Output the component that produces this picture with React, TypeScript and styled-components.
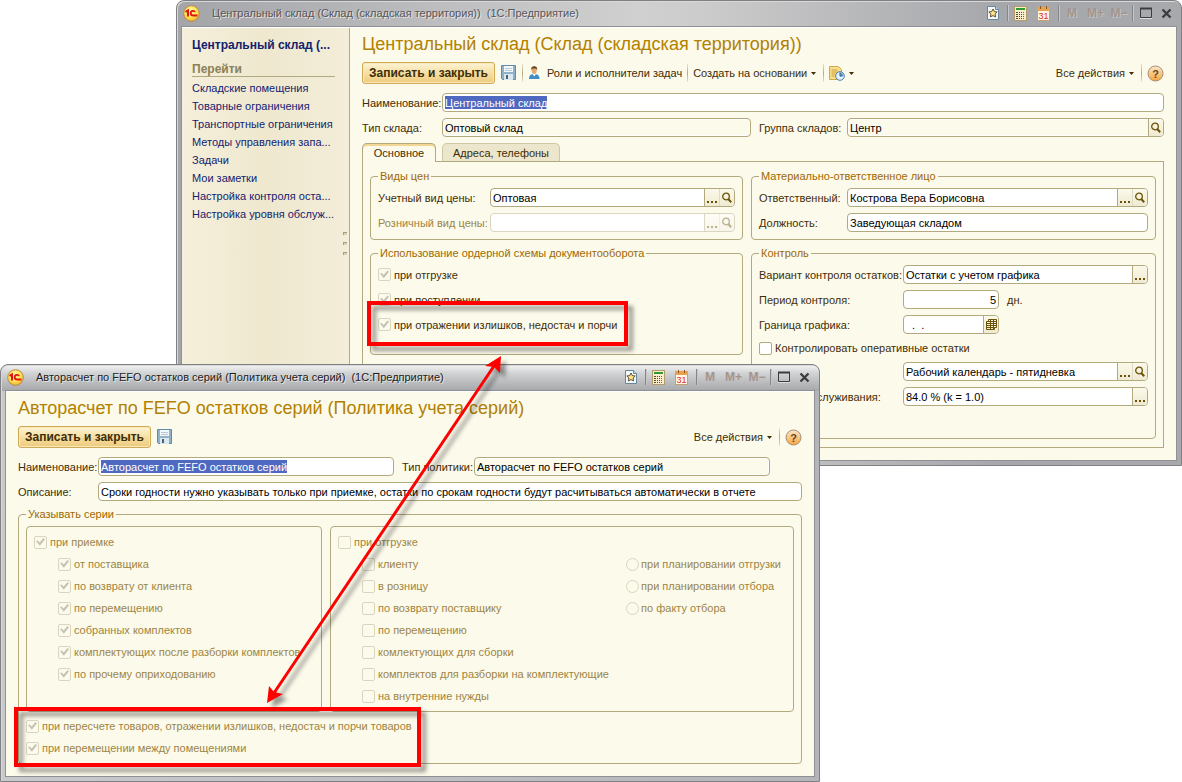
import React, { useId } from "react";
import styled, { createGlobalStyle, css } from "styled-components";

const c = {
  paper: "#fcfaeb",
  line: "#b2a97f",
  faintLine: "#d9d5c0",
  text: "#3f2d06",
  muted: "#9c8544",
  title: "#b28100",
  legend: "#a06800",
  link: "#14226e",
  red: "#ff0000",
};

const GlobalStyle = createGlobalStyle`
  * { box-sizing: border-box; }
  body {
    margin: 0;
    background: #fff;
    color: ${c.text};
    font: 11px/14px "Liberation Sans", Arial, sans-serif;
  }
  button, input { font: inherit; color: inherit; margin: 0; }
`;

/* ---------- desktop and windows ---------- */

const Desktop = styled.main`
  position: relative;
  min-height: 782px;
  overflow: hidden;
`;

const Frame = styled.section<{ $active?: boolean }>`
  position: absolute;
  padding: 0 5px 5px;
  border: 1px solid #7f8083;
  border-radius: 8px 8px 0 0;
  background: ${(p) =>
    p.$active
      ? "linear-gradient(180deg, #f4f4f4 0, #d2d3d4 8px, #a6a7aa 26px, transparent 26px), linear-gradient(90deg, #c9c9cb, #b4b5b8)"
      : "linear-gradient(90deg, #a4a5a9 0, #d0d0d0 46%, #cccccc 52%, #a6a7ab 82%, #a8a9ac 100%)"};
  box-shadow: inset 1px 1px 0 #d8d8d8;
`;

const WarehouseFrame = styled(Frame)`
  top: 0;
  left: 176px;
  right: 0;
`;

const PolicyFrame = styled(Frame)`
  top: 364px;
  left: 0;
  right: 362px;
`;

const TitleBar = styled.header<{ $active?: boolean }>`
  display: flex;
  align-items: center;
  height: 26px;
  padding: 0 4px 2px 1px;
  color: ${(p) => (p.$active ? "#1c1c1c" : "#55565a")};
  text-shadow: 1px 1px 0 #e6e6e6;
`;

const TitleText = styled.span`
  flex: 1;
  margin-left: 12px;
  white-space: pre;
`;

const BarButton = styled.button<{ $w: number; $gap?: number }>`
  display: flex;
  justify-content: center;
  width: ${(p) => p.$w}px;
  margin-right: ${(p) => p.$gap ?? 0}px;
  padding: 0;
  border: 0;
  background: none;
`;

const MemoryButton = styled(BarButton)`
  color: #a3968f;
  font-size: 12px;
  font-weight: 700;
  text-shadow: 1px 1px 0 #c4c1c0;
`;

const BarRule = styled.i<{ $gap: number }>`
  width: 2px;
  height: 16px;
  margin-right: ${(p) => p.$gap}px;
  border-left: 1px solid #85868a;
  border-right: 1px solid #c6c6c8;
`;

const Client = styled.div`
  display: flex;
  background: ${c.paper};
  border-top: 1px solid #fff;
  box-shadow: 0 0 0 1px #8f9093;
`;

const Page = styled.div<{ $bottom: number }>`
  flex: 1;
  min-width: 0;
  padding: 4px 12px ${(p) => p.$bottom}px;
`;

const Heading = styled.h1`
  margin: 0 0 6px;
  color: ${c.title};
  font-size: 18px;
  font-weight: 400;
  line-height: 24px;
`;

/* ---------- sidebar ---------- */

const Sidebar = styled.nav`
  position: relative;
  flex: none;
  width: 168px;
  padding: 10px 14px 0 10px;
  border-right: 1px solid ${c.line};
  background: linear-gradient(90deg, #f5efdb, #efe8cf 50%, #f3edd9);
`;

const SidebarTitle = styled.a`
  display: block;
  margin-bottom: 10px;
  color: ${c.link};
  font-size: 12px;
  font-weight: 700;
  text-decoration: none;
  white-space: nowrap;
`;

const SidebarGroup = styled.h2`
  margin: 0 0 2px;
  border-bottom: 1px solid ${c.line};
  color: #8b8057;
  font-size: 12px;
  line-height: 14px;
`;

const SidebarLink = styled.a`
  display: block;
  color: ${c.link};
  line-height: 18px;
  text-decoration: none;
  white-space: nowrap;
`;

const Grip = styled.div`
  position: absolute;
  top: 204px;
  right: 2px;
  display: grid;
  gap: 7px;

  i {
    width: 4px;
    height: 3px;
    border-top: 1px solid #a79e78;
    border-left: 1px solid #a79e78;
    background: #d9d2b6;
  }
`;

/* ---------- toolbar ---------- */

const Toolbar = styled.div`
  display: flex;
  align-items: center;
  height: 22px;
  margin-bottom: 9px;
`;

const PrimaryButton = styled.button`
  width: 133px;
  height: 22px;
  padding: 0;
  border: 1px solid #d0a954;
  border-radius: 3px;
  background: linear-gradient(#fdf3d4, #f6dfa4 50%, #edca7c);
  box-shadow: inset 0 0 0 1px #fbe9bb;
  font-size: 12px;
  font-weight: 700;
  white-space: nowrap;
`;

const ToolButton = styled.button`
  display: flex;
  align-items: center;
  gap: 4px;
  padding: 0;
  border: 0;
  background: none;
  white-space: nowrap;
`;

const SaveButton = styled(ToolButton)`
  margin-left: 6px;
`;

const IconText = styled(ToolButton)`
  gap: 6px;
`;

const ToolRule = styled.i`
  width: 1px;
  height: 18px;
  margin: 0 5px;
  background: linear-gradient(#e8e3cc, ${c.line}, #e8e3cc);
`;

const Spacer = styled.span`
  flex: 1;
`;

/* ---------- fields ---------- */

const Row = styled.div<{ $h?: number }>`
  display: flex;
  align-items: center;
  height: ${(p) => p.$h ?? 19}px;
  & + & { margin-top: 6px; }
`;

const FieldLabel = styled.label<{ $w: number; $off?: boolean }>`
  flex: none;
  width: ${(p) => p.$w}px;
  color: ${(p) => (p.$off ? c.muted : "inherit")};
  white-space: nowrap;
`;

const Box = styled.span<{ $w?: number; $off?: boolean; $grow?: number; $readOnly?: boolean; $end?: number }>`
  display: flex;
  flex: ${(p) => (p.$w ? `0 0 ${p.$w}px` : `${p.$grow ?? 1} 1 0`)};
  min-width: 0;
  height: 19px;
  margin-right: ${(p) => p.$end ?? 0}px;
  border: 1px solid ${(p) => (p.$off ? c.faintLine : c.line)};
  border-radius: 4px;
  background: ${(p) => (p.$readOnly ? c.paper : "#fff")};
  box-shadow: ${(p) => (p.$readOnly ? "inset 0 0 0 1px #fff" : "none")};
  overflow: hidden;
`;

const TextInput = styled.input<{ $selected?: boolean; $right?: boolean }>`
  flex: 1;
  min-width: 0;
  padding: 0 2px;
  border: 0;
  outline: 0;
  background: none;
  color: #000;
  text-align: ${(p) => (p.$right ? "right" : "left")};
  ${(p) =>
    p.$selected &&
    css`
      flex: none;
      field-sizing: content;
      margin: 2px;
      padding: 0;
      background: #5069c0;
      color: #fff;
    `}
`;

const FieldButton = styled.button<{ $off?: boolean; $plain?: boolean }>`
  display: flex;
  flex: none;
  align-items: center;
  justify-content: center;
  width: 15px;
  padding: 0;
  border: 0;
  border-left: 1px solid ${(p) => (p.$plain ? "#e0dbc3" : c.line)};
  background: linear-gradient(#fbf9ea, #efead2);
  color: #6b5206;
  opacity: ${(p) => (p.$off ? 0.45 : 1)};
`;

const Unit = styled.span`
  margin-left: 8px;
`;

const Group = styled.fieldset<{ $bottom?: number }>`
  min-width: 0;
  margin: 0;
  padding: 5px 7px ${(p) => p.$bottom ?? 7}px;
  border: 1px solid ${c.line};
  border-radius: 4px;

  > legend {
    margin-left: 0;
    padding: 0 2px;
    color: ${c.legend};
  }
`;

const Columns = styled.div`
  display: flex;
  gap: 8px;
`;

const Column = styled.div<{ $grow: number }>`
  display: flex;
  flex: ${(p) => p.$grow} 1 0;
  flex-direction: column;
  gap: 6px;
  min-width: 0;
`;

/* ---------- tick boxes ---------- */

const CheckLabel = styled.label<{ $muted?: boolean; $gap?: number }>`
  display: flex;
  align-items: center;
  gap: ${(p) => p.$gap ?? 3}px;
  color: ${(p) => (p.$muted ? c.muted : "inherit")};
  white-space: nowrap;
`;

const Tick = styled.input<{ $strong?: boolean }>`
  appearance: none;
  flex: none;
  width: 13px;
  height: 13px;
  border: 1px solid ${(p) => (p.$strong ? c.line : c.faintLine)};
  border-radius: ${(p) => (p.type === "radio" ? "50%" : "2px")};
  background: ${(p) => (p.$strong ? "#fff" : "transparent")};

  &:checked::before {
    content: "";
    display: block;
    width: 9px;
    height: 9px;
    margin: 1px;
    background: #c4c2b4;
    clip-path: polygon(0 40%, 18% 32%, 40% 55%, 84% 6%, 100% 20%, 42% 92%);
  }
`;

/* ---------- tabs ---------- */

const TabStrip = styled.div`
  display: flex;
  gap: 6px;
  height: 18px;
  margin-top: 6px;
`;

const Tab = styled.button<{ $on?: boolean; $w: number }>`
  width: ${(p) => p.$w}px;
  height: ${(p) => (p.$on ? 19 : 18)}px;
  padding: 0;
  border: 1px solid ${(p) => (p.$on ? c.line : "#cfc8a6")};
  border-bottom: 0;
  border-radius: 5px 5px 0 0;
  background: ${(p) => (p.$on ? c.paper : "#ece6cd")};
  box-shadow: ${(p) => (p.$on ? "inset 0 2px 0 #f3d594" : "none")};
  z-index: 1;
`;

const TabPanel = styled.div`
  padding: 7px 7px 8px;
  border: 1px solid ${c.line};
`;

/* ---------- policy form ---------- */

const SeriesColumns = styled.div`
  display: grid;
  grid-template-columns: 296fr 464fr;
  gap: 8px;
`;

const Panel = styled.div`
  min-height: 186px;
  padding: 4px 7px;
  border: 1px solid ${c.line};
  border-radius: 4px;
`;

const PanelSplit = styled.div`
  display: flex;
  justify-content: space-between;
  padding: 0 5px 0 24px;
`;

const CheckList = styled.div`
  display: grid;
  align-content: start;
  grid-auto-rows: 22px;
`;

/* ---------- markup drawn over the windows ---------- */

const Callout = styled.div<{ $x: number; $y: number; $w: number; $h: number }>`
  position: absolute;
  top: ${(p) => p.$y}px;
  left: ${(p) => p.$x}px;
  width: ${(p) => p.$w}px;
  height: ${(p) => p.$h}px;
  border: 4px solid ${c.red};
  filter: drop-shadow(5px 5px 2px rgba(0, 0, 0, 0.4));
  pointer-events: none;
`;

const ArrowLayer = styled.svg`
  position: absolute;
  top: 350px;
  left: 260px;
  pointer-events: none;
  filter: drop-shadow(5px 5px 2px rgba(0, 0, 0, 0.4));
`;

/* ---------- icons ---------- */

const Logo = () => (
  <svg width="17" height="17" viewBox="0 0 17 17" aria-hidden="true">
    <defs>
      <radialGradient id="sun" cx="0.45" cy="0.35" r="0.7">
        <stop offset="0" stopColor="#fffbb0" />
        <stop offset="0.6" stopColor="#ffe04e" />
        <stop offset="1" stopColor="#f0a62a" />
      </radialGradient>
    </defs>
    <circle cx="8.5" cy="8.5" r="7.8" fill="url(#sun)" stroke="#b98a4a" />
    <path d="M2.500 6.800L5 5.500V11.500" fill="none" stroke="#e0180c" strokeWidth="2" />
    <path d="M12 7C11.500 5.600 7.700 5.200 7.700 8.200C7.700 10.300 9.200 10.500 10.500 10.500H14.500" fill="none" stroke="#e0180c" strokeWidth="1.800" />
  </svg>
);

const StarPage = () => (
  <svg width="14" height="14" viewBox="0 0 14 14" aria-hidden="true">
    <path d="M1.500.5h8l3 3v10h-11z" fill="#f4f8fa" stroke="#64879b" />
    <path d="M9.500.5v3h3" fill="#c9dce6" stroke="#64879b" />
    <path d="M7 3l1.300 2.600 2.900.4-2.100 2 .5 2.900L7 9.600l-2.600 1.300.5-2.900-2.100-2 2.900-.4z" fill="#ffe28a" stroke="#5d5030" strokeWidth="1" />
  </svg>
);

const Calculator = () => (
  <svg width="14" height="15" viewBox="0 0 14 15" aria-hidden="true">
    <rect x=".5" y=".5" width="12" height="14" fill="#f8edcc" stroke="#b39b6b" />
    <rect x="2" y="2" width="9" height="2" fill="#2d9a32" />
    {[6, 8, 10, 12].map((y) =>
      [2, 5, 7, 9].map((x) => (
        <rect key={`${x}-${y}`} x={x} y={y} width={x === 2 ? 2 : 1} height="1" fill={x === 9 ? "#d6402c" : "#5c4a26"} />
      )),
    )}
  </svg>
);

const CalendarIcon = () => (
  <svg width="14" height="15" viewBox="0 0 14 15" aria-hidden="true">
    <rect x=".5" y="1.500" width="12" height="13" fill="#fff6e4" stroke="#c79f72" />
    <rect x="0" y="1" width="13" height="4" fill="#e5a250" />
    <path d="M3.500 0v3M9.500 0v3" stroke="#8d5520" />
    <text x="6.500" y="13" textAnchor="middle" fontSize="9" fill="#e0301e" style={{ textShadow: "none" }}>31</text>
  </svg>
);

const Maximize = () => (
  <svg width="12" height="12" viewBox="0 0 12 12" aria-hidden="true">
    <path d="M.5 1.500h11v9H.5z" fill="none" stroke="#3c3c3e" />
    <path d="M0 1.500h12" stroke="#3c3c3e" strokeWidth="2" />
    <path d="M0 11.500h12" stroke="#dedede" />
  </svg>
);

const Close = () => (
  <svg width="11" height="11" viewBox="0 0 11 11" aria-hidden="true">
    <path d="M1.500 1.500l8 8M9.500 1.500l-8 8" stroke="#3c3c3e" strokeWidth="2.300" />
  </svg>
);

const Floppy = () => (
  <svg width="16" height="16" viewBox="0 0 16 16" aria-hidden="true">
    <path d="M.5.5h14v14h-13l-1-1z" fill="#8fb2ca" stroke="#5f8aa8" />
    <rect x="3" y="1" width="9" height="6" fill="#f4f8fa" />
    <path d="M4 3.500h7M4 5.500h7" stroke="#b5cad6" />
    <rect x="3" y="9" width="9" height="6" fill="#dce8ee" />
    <rect x="5" y="10" width="2" height="4" fill="#41647d" />
  </svg>
);

const Person = () => (
  <svg width="13" height="14" viewBox="0 0 13 14" aria-hidden="true">
    <path d="M1 13c0-4 2-5 5-5s5.500 1 5.500 5z" fill="#3f8fc4" />
    <path d="M4.500 8l1.700 2.500L8 8z" fill="#fff" />
    <ellipse cx="6.200" cy="4.300" rx="2.500" ry="3.600" fill="#e0aa72" />
    <path d="M3.300 4C3 1 4.500.3 6.200.3S9.500 1 9.100 4L8 2.600H4.500z" fill="#6b4018" />
  </svg>
);

const Report = () => (
  <svg width="16" height="16" viewBox="0 0 16 16" aria-hidden="true">
    <path d="M.5 1.500h9l3 3v10H.5z" fill="#f8dd8a" stroke="#d2a84e" />
    <path d="M2.500 5h6M2.500 7h6M2.500 9h4M2.500 11h3" stroke="#cfa140" />
    <circle cx="11" cy="11" r="4.300" fill="#e8f2fa" stroke="#4a7fb2" />
    <path d="M11 11V7.500A3.500 3.500 0 0 1 14.500 11z" fill="#6aa4d4" />
    <path d="M11 7.500V11h2.500" fill="none" stroke="#2b5580" />
  </svg>
);

const Help = () => (
  <svg width="17" height="17" viewBox="0 0 17 17" aria-hidden="true">
    <defs>
      <linearGradient id="amber" x2="0" y2="1">
        <stop offset="0" stopColor="#fbe7cc" />
        <stop offset="1" stopColor="#f8a63c" />
      </linearGradient>
    </defs>
    <circle cx="8.500" cy="8.500" r="7.500" fill="url(#amber)" stroke="#a58d78" />
    <text x="8.500" y="12.500" textAnchor="middle" fontSize="11" fontWeight="700" fill="#6b4326">?</text>
  </svg>
);

const Caret = () => (
  <svg width="7" height="3" viewBox="0 0 7 3" aria-hidden="true">
    <path d="M0 0h5L2.500 3z" fill={c.text} />
  </svg>
);

const Magnifier = () => (
  <svg width="12" height="12" viewBox="0 0 12 12" aria-hidden="true">
    <circle cx="5" cy="4.500" r="3.300" fill="none" stroke="currentColor" strokeWidth="1.300" />
    <path d="M7.200 7l3 3.200" stroke="currentColor" strokeWidth="2" />
  </svg>
);

const Dots = () => (
  <svg width="11" height="12" viewBox="0 0 11 12" aria-hidden="true">
    <path d="M0 9h2v2H0zM4 9h2v2H4zM8 9h2v2H8z" fill="currentColor" />
  </svg>
);

const DateGrid = () => (
  <svg width="11" height="12" viewBox="0 0 11 12" aria-hidden="true">
    <path d="M2.500.5h8v8h-2v2h-8v-8h2zM.5 4.500h10M.5 6.500h10M.5 8.500h8M2.500 2.500h8M4.500 .5v10M7.500.5v10" fill="none" stroke="currentColor" />
  </svg>
);

/* ---------- parts ---------- */

function WindowBar({ title, active }: { title: string; active?: boolean }) {
  return (
    <TitleBar $active={active}>
      <Logo />
      <TitleText>{title}</TitleText>
      <BarButton $w={14} $gap={7} aria-label="Избранное"><StarPage /></BarButton>
      <BarRule $gap={5} />
      <BarButton $w={14} $gap={9} aria-label="Калькулятор"><Calculator /></BarButton>
      <BarButton $w={14} $gap={7} aria-label="Календарь"><CalendarIcon /></BarButton>
      <BarRule $gap={1} />
      <MemoryButton $w={22}>M</MemoryButton>
      <MemoryButton $w={25}>M+</MemoryButton>
      <MemoryButton $w={22} $gap={2}>M−</MemoryButton>
      <BarRule $gap={6} />
      <BarButton $w={12} $gap={9} aria-label="Развернуть"><Maximize /></BarButton>
      <BarButton $w={11} aria-label="Закрыть"><Close /></BarButton>
    </TitleBar>
  );
}

type FieldProps = {
  label?: string;
  name?: string;
  labelWidth: number;
  value: string;
  width?: number;
  grow?: number;
  end?: number;
  off?: boolean;
  readOnly?: boolean;
  selected?: boolean;
  right?: boolean;
  buttons?: Array<"pick" | "find" | "date">;
};

const glyphs = { pick: <Dots />, find: <Magnifier />, date: <DateGrid /> };
const glyphNames = { pick: "Выбрать", find: "Открыть", date: "Дата" };

function Field({ label, name, labelWidth, value, width, grow, end, off, readOnly, selected, right, buttons = [] }: FieldProps) {
  const id = useId();
  return (
    <>
      <FieldLabel htmlFor={id} $w={labelWidth} $off={off}>{label}</FieldLabel>
      <Box $w={width} $grow={grow} $off={off} $readOnly={readOnly} $end={end}>
        <TextInput
          id={id}
          aria-label={name}
          defaultValue={value}
          disabled={off}
          readOnly={readOnly}
          $selected={selected}
          $right={right}
        />
        {buttons.map((b, i) => (
          <FieldButton key={b} aria-label={glyphNames[b]} disabled={off} $off={off} $plain={i > 0}>
            {glyphs[b]}
          </FieldButton>
        ))}
      </Box>
    </>
  );
}

function Check({ text, checked, muted, strong }: { text: string; checked?: boolean; muted?: boolean; strong?: boolean }) {
  return (
    <CheckLabel $muted={muted}>
      <Tick type="checkbox" defaultChecked={checked} disabled={!strong} $strong={strong} />
      {text}
    </CheckLabel>
  );
}

function AllActions() {
  return (
    <>
      <ToolButton>Все действия <Caret /></ToolButton>
      <ToolRule />
      <ToolButton aria-label="Справка"><Help /></ToolButton>
    </>
  );
}

const links = [
  "Складские помещения",
  "Товарные ограничения",
  "Транспортные ограничения",
  "Методы управления запа...",
  "Задачи",
  "Мои заметки",
  "Настройка контроля оста...",
  "Настройка уровня обслуж...",
];

const receiving = [
  "от поставщика",
  "по возврату от клиента",
  "по перемещению",
  "собранных комплектов",
  "комплектующих после разборки комплектов",
  "по прочему оприходованию",
];

const shipping = [
  "клиенту",
  "в розницу",
  "по возврату поставщику",
  "по перемещению",
  "комлектующих для сборки",
  "комплектов для разборки на комплектующие",
  "на внутренние нужды",
];

const moments = ["при планировании отгрузки", "при планировании отбора", "по факту отбора"];

function WarehouseWindow() {
  return (
    <WarehouseFrame>
      <WindowBar title="Центральный склад (Склад (складская территория))  (1С:Предприятие)" />
      <Client>
        <Sidebar>
          <SidebarTitle href="#main">Центральный склад (...</SidebarTitle>
          <SidebarGroup>Перейти</SidebarGroup>
          {links.map((l) => <SidebarLink key={l} href="#section">{l}</SidebarLink>)}
          <Grip><i /><i /><i /></Grip>
        </Sidebar>
        <Page $bottom={12}>
          <Heading>Центральный склад (Склад (складская территория))</Heading>
          <Toolbar>
            <PrimaryButton>Записать и закрыть</PrimaryButton>
            <SaveButton aria-label="Записать"><Floppy /></SaveButton>
            <ToolRule />
            <IconText><Person />Роли и исполнители задач</IconText>
            <ToolRule />
            <ToolButton>Создать на основании <Caret /></ToolButton>
            <ToolRule />
            <ToolButton aria-label="Отчеты"><Report /><Caret /></ToolButton>
            <Spacer />
            <AllActions />
          </Toolbar>
          <Row>
            <Field label="Наименование:" labelWidth={80} value="Центральный склад" selected />
          </Row>
          <Row>
            <Field label="Тип склада:" labelWidth={80} value="Оптовый склад" grow={309} end={8} readOnly />
            <Field label="Группа складов:" labelWidth={88} value="Центр" grow={317} readOnly buttons={["find"]} />
          </Row>
          <TabStrip role="tablist">
            <Tab role="tab" aria-selected $on $w={74}>Основное</Tab>
            <Tab role="tab" $w={118}>Адреса, телефоны</Tab>
          </TabStrip>
          <TabPanel role="tabpanel">
            <Columns>
              <Column $grow={373}>
                <Group>
                  <legend>Виды цен</legend>
                  <Row>
                    <Field label="Учетный вид цены:" labelWidth={112} value="Оптовая" buttons={["pick", "find"]} />
                  </Row>
                  <Row>
                    <Field label="Розничный вид цены:" labelWidth={112} value="" off buttons={["pick", "find"]} />
                  </Row>
                </Group>
                <Group $bottom={20}>
                  <legend>Использование ордерной схемы документооборота</legend>
                  <Row><Check text="при отгрузке" checked /></Row>
                  <Row><Check text="при поступлении" checked /></Row>
                  <Row><Check text="при отражении излишков, недостач и порчи" checked /></Row>
                </Group>
              </Column>
              <Column $grow={405}>
                <Group>
                  <legend>Материально-ответственное лицо</legend>
                  <Row>
                    <Field label="Ответственный:" labelWidth={88} value="Кострова Вера Борисовна" buttons={["pick", "find"]} />
                  </Row>
                  <Row>
                    <Field label="Должность:" labelWidth={88} value="Заведующая складом" />
                  </Row>
                </Group>
                <Group $bottom={32}>
                  <legend>Контроль</legend>
                  <Row>
                    <Field label="Вариант контроля остатков:" labelWidth={144} value="Остатки с учетом графика" buttons={["pick"]} />
                  </Row>
                  <Row>
                    <Field label="Период контроля:" labelWidth={144} value="5" width={96} right />
                    <Unit>дн.</Unit>
                  </Row>
                  <Row>
                    <Field label="Граница графика:" labelWidth={144} value="  .  ." width={96} buttons={["date"]} />
                  </Row>
                  <Row $h={16}>
                    <Check text="Контролировать оперативные остатки" strong />
                  </Row>
                  <Row>
                    <Field name="Календарь" labelWidth={144} value="Рабочий календарь - пятидневка" buttons={["pick", "find"]} />
                  </Row>
                  <Row>
                    <Field label="Уровень обслуживания:" labelWidth={144} value="84.0 % (k = 1.0)" buttons={["pick"]} />
                  </Row>
                </Group>
              </Column>
            </Columns>
          </TabPanel>
        </Page>
      </Client>
    </WarehouseFrame>
  );
}

function PolicyWindow() {
  return (
    <PolicyFrame $active>
      <WindowBar active title="Авторасчет по FEFO остатков серий (Политика учета серий)  (1С:Предприятие)" />
      <Client>
        <Page $bottom={12}>
          <Heading>Авторасчет по FEFO остатков серий (Политика учета серий)</Heading>
          <Toolbar>
            <PrimaryButton>Записать и закрыть</PrimaryButton>
            <SaveButton aria-label="Записать"><Floppy /></SaveButton>
            <Spacer />
            <AllActions />
          </Toolbar>
          <Row>
            <Field label="Наименование:" labelWidth={80} value="Авторасчет по FEFO остатков серий" end={8} selected />
            <Field label="Тип политики:" labelWidth={72} value="Авторасчет по FEFO остатков серий" end={32} readOnly />
          </Row>
          <Row>
            <Field
              label="Описание:"
              labelWidth={80}
              value="Сроки годности нужно указывать только при приемке, остатки по срокам годности будут расчитываться автоматически в отчете"
            />
          </Row>
          <SeriesGroup>
            <legend>Указывать серии</legend>
            <SeriesColumns>
              <Panel>
                <CheckList><Check text="при приемке" checked muted /></CheckList>
                <PanelSplit>
                  <CheckList>
                    {receiving.map((t) => <Check key={t} text={t} checked muted />)}
                  </CheckList>
                </PanelSplit>
              </Panel>
              <Panel>
                <CheckList><Check text="при отгрузке" muted /></CheckList>
                <PanelSplit>
                  <CheckList>
                    {shipping.map((t) => <Check key={t} text={t} muted />)}
                  </CheckList>
                  <CheckList>
                    {moments.map((t) => (
                      <CheckLabel key={t} $muted $gap={2}>
                        <Tick type="radio" name="moment" disabled />
                        {t}
                      </CheckLabel>
                    ))}
                  </CheckList>
                </PanelSplit>
              </Panel>
            </SeriesColumns>
            <CheckList>
              <Check text="при пересчете товаров, отражении излишков, недостач и порчи товаров" checked muted />
              <Check text="при перемещении между помещениями" checked muted />
            </CheckList>
          </SeriesGroup>
        </Page>
      </Client>
    </PolicyFrame>
  );
}

const SeriesGroup = styled(Group)`
  margin-top: 6px;
  padding-bottom: 4px;

  > ${SeriesColumns} { margin-bottom: 3px; }
`;

export default function App() {
  return (
    <>
      <GlobalStyle />
      <Desktop>
        <WarehouseWindow />
        <PolicyWindow />
        <Callout $x={367} $y={301} $w={261} $h={45} />
        <Callout $x={14} $y={707} $w={407} $h={60} />
        <ArrowLayer width="260" height="370" viewBox="0 0 260 370" aria-hidden="true">
          <path d="M234 16L14 343" stroke={c.red} strokeWidth="3" />
          <path d="M241 6L240 23L234 17L225 16z" fill={c.red} />
          <path d="M7 353L9 336L14 342L23 344z" fill={c.red} />
        </ArrowLayer>
      </Desktop>
    </>
  );
}
